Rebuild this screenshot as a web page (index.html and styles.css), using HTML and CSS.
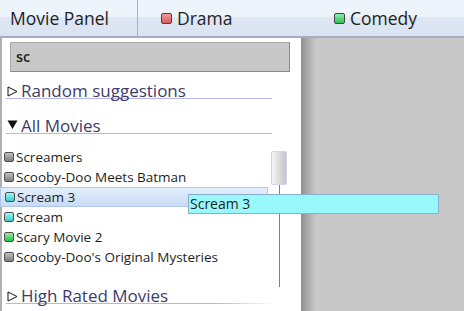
FILE: index.html
```html
<!DOCTYPE html>
<html lang="en">

<head>
  <meta charset="UTF-8">
  <title>Movie Panel</title>
  <link rel="stylesheet" href="styles.css">
</head>

<body>
  <div class="top-bar">
    <div class="panel-title">Movie Panel</div>
    <div class="genre-tab drama"><span class="box box-red"></span>Drama</div>
    <div class="genre-tab"><span class="box box-green"></span>Comedy</div>
  </div>

  <div class="main">
    <div class="side-panel">
      <div class="search">sc</div>

      <div class="section-head">
        <svg class="arrow" width="11" height="11" viewBox="0 0 11 11"><path d="M1 1 L10 5.5 L1 10 Z" fill="none" stroke="#111" stroke-width="1"/></svg>
        Random suggestions
      </div>
      <div class="section-head">
        <svg class="arrow open" width="11" height="11" viewBox="0 0 11 11"><path d="M0.5 1.5 L10.5 1.5 L5.5 10 Z" fill="#111"/></svg>
        All Movies
      </div>

      <div class="movie-area">
        <ul class="movie-list">
          <li><span class="icon icon-gray"></span>Screamers</li>
          <li><span class="icon icon-gray"></span>Scooby-Doo Meets Batman</li>
          <li class="selected"><span class="icon icon-cyan"></span>Scream 3</li>
          <li><span class="icon icon-cyan"></span>Scream</li>
          <li><span class="icon icon-green"></span>Scary Movie 2</li>
          <li><span class="icon icon-gray"></span>Scooby-Doo's Original Mysteries</li>
        </ul>
        <div class="scroll">
          <div class="thumb"></div>
          <div class="track"></div>
        </div>
        <div class="tooltip">Scream 3</div>
      </div>

      <div class="section-head last">
        <svg class="arrow" width="11" height="11" viewBox="0 0 11 11"><path d="M1 1 L10 5.5 L1 10 Z" fill="none" stroke="#111" stroke-width="1"/></svg>
        High Rated Movies
      </div>
    </div>
    <div class="canvas"></div>
  </div>
</body>

</html>
```

FILE: styles.css
```css
body {
  margin: 0;
  padding: 0;
  width: 464px;
  height: 311px;
  overflow: hidden;
  font-family: "Open Sans", "Noto Sans", sans-serif;
  color: #1e1e1e;
  background-color: #c8c8c8;
}

/* header */
.top-bar {
  display: flex;
  height: 36px;
  background: linear-gradient(#eef4fc 0px, #eef4fc 17px, #dee7f4 17px, #dae3f1 36px);
  border-bottom: 2px solid #a4aec0;
}

.panel-title {
  width: 127px;
  padding-left: 10px;
  border-right: 1px solid #a6afbd;
  font-size: 17.5px;
  line-height: 36px;
}

.genre-tab {
  display: flex;
  align-items: center;
  padding-left: 23px;
  font-size: 17.5px;
}

.drama {
  width: 150px;
}

.box {
  width: 9px;
  height: 9px;
  margin-right: 5px;
  border: 1px solid #444;
  border-radius: 2px;
}

.box-red {
  background: linear-gradient(#f59a9a, #d85a5a);
}

.box-green {
  background: linear-gradient(#8ff0a8, #2ec25a);
}

/* body */
.main {
  display: flex;
  height: 273px;
}

.side-panel {
  width: 299px;
  background-color: #fff;
  border-left: 2px solid #b0b0b0;
}

.canvas {
  flex: 1;
  background: linear-gradient(to right, #8e8e8e 0px, #a8a8a8 6px, #c8c8c8 15px, #c8c8c8 100%);
}

.search {
  margin: 4px 0 0 8px;
  width: 273px;
  height: 28px;
  padding-left: 5px;
  background-color: #c8c8c8;
  border: 1px solid #a8a8a8;
  border-right-color: #8a8a8a;
  border-bottom-color: #8a8a8a;
  font-size: 14.5px;
  font-weight: 600;
  line-height: 28px;
}

.section-head {
  display: flex;
  align-items: flex-end;
  height: 26px;
  margin-left: 4px;
  width: 266px;
  color: #3c3c6c;
  font-size: 17px;
  line-height: 15px;
  border-bottom: 1px solid #b6b6e8;
}

.section-head + .section-head {
  height: 34px;
}

.section-head.last {
  height: 16px;
  border-image: linear-gradient(to right, #b6b6e8 80%, #ffffff) 1;
}

.arrow {
  flex: none;
  margin: 0 3px 1px 1px;
}

.arrow.open {
  margin-bottom: 3px;
}

.movie-area {
  position: relative;
  display: flex;
  margin-top: 13px;
  height: 140px;
}

.movie-list {
  list-style: none;
  margin: 0;
  padding: 0;
  width: 266px;
}

.movie-list li {
  display: flex;
  align-items: center;
  height: 20px;
  padding-left: 2px;
  font-size: 13.5px;
  white-space: nowrap;
  box-sizing: border-box;
}

.movie-list li.selected {
  margin-left: -2px;
  padding-left: 4px;
  border: 1px solid #adc6ea;
  background: linear-gradient(#e2eefc, #c9dcf6);
}

.icon {
  flex: none;
  width: 8px;
  height: 8px;
  margin-right: 2px;
  border: 1px solid #505050;
  border-radius: 2px;
}

.icon-gray {
  background: linear-gradient(#c0c0c0, #7c7c7c);
}

.icon-cyan {
  background: linear-gradient(#9ff6f6, #3ccaca);
}

.icon-green {
  background: linear-gradient(#90f0a0, #2ec04e);
}

.scroll {
  display: flex;
  flex-direction: column;
  align-items: center;
  margin: 4px 0 0 3px;
  width: 16px;
}

.thumb {
  width: 14px;
  height: 32px;
  border: 1px solid #d2d2ee;
  border-radius: 2px;
  background: linear-gradient(to right, #f6f6f6, #c4c4c4);
}

.track {
  flex: 1;
  width: 1px;
  background-color: #808080;
}

.tooltip {
  position: absolute;
  left: 186px;
  top: 47px;
  width: 248px;
  height: 18px;
  padding-left: 1px;
  background-color: #98f8fb;
  border: 1px solid #8aaed0;
  font-size: 14px;
  line-height: 18px;
}
```
